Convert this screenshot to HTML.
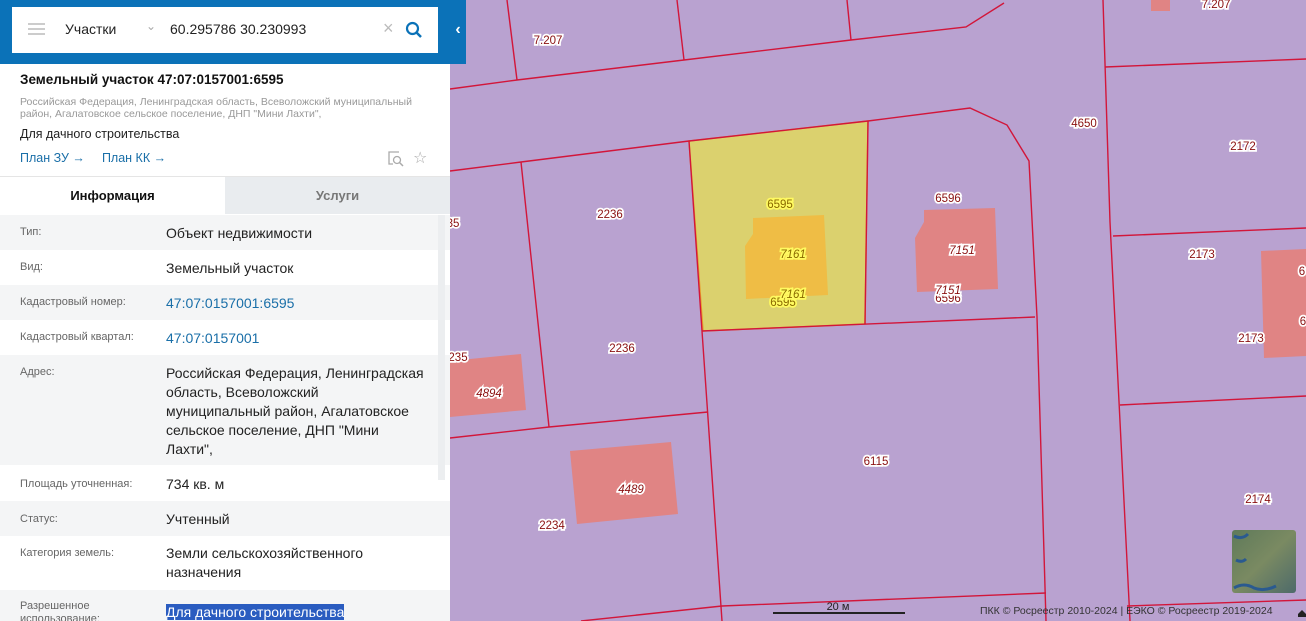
<!DOCTYPE html>
<html><head><meta charset="utf-8"><style>
*{margin:0;padding:0;box-sizing:border-box}
body{width:1306px;height:621px;overflow:hidden;position:relative;font-family:"Liberation Sans","DejaVu Sans",sans-serif;background:#b9a2d0}
#map{position:absolute;left:0;top:0}
#panel{position:absolute;left:0;top:0;width:450px;height:621px;background:#fff;overflow:hidden}
.hdr{height:64px;background:#0b72b8;position:relative}
.sb{position:absolute;left:12px;top:7px;width:426px;height:46px;background:#fff}
.tab{position:absolute;left:450px;top:0;width:16px;height:64px;background:#0b72b8;color:#fff;font-size:16px;font-weight:bold;text-align:center;line-height:60px}
.row{position:absolute;left:0;width:450px}
.lab{position:absolute;left:20px;font-size:11px;color:#666}
.val{position:absolute;left:166px;font-size:14px;color:#222;line-height:19px;width:280px;white-space:nowrap}
.g{background:#f4f5f6}
a{color:#1a6fa8;text-decoration:none}
.lbl{font-size:11.5px;fill:#8a1010;stroke:#fff;stroke-width:3.5;paint-order:stroke;font-family:"Liberation Sans",sans-serif;text-anchor:middle}
.ly{fill:#8a6a00;stroke:#fffa60}
</style></head><body>
<svg id="map" width="1306" height="621" viewBox="0 0 1306 621">
<rect width="1306" height="621" fill="#b9a2d0"/>
<polygon points="689,141 868,121 865,324 703,331" fill="#dbd16e" stroke="#e89a2a" stroke-width="1.5"/>
<polygon points="753,218 824,215 828,295 746,299 745,246 753,234" fill="#efbd45"/>
<polygon points="924,210 995,208 998,289 917,292 915,238 924,222" fill="#e08484"/>
<polygon points="450,361 521,354 526,410 450,417" fill="#e08484"/>
<polygon points="570,451 671,442 678,514 577,524" fill="#e08484"/>
<polygon points="1261,251 1306,249 1306,356 1264,358" fill="#e08484"/>
<polygon points="1151,0 1170,0 1170,11 1151,11" fill="#e08484"/>
<g stroke="#d2163a" stroke-width="1.4" fill="none">
<polyline points="450,89 517,80 684,60 851,40 966,27 1004,3"/>
<line x1="507" y1="0" x2="517" y2="80"/><line x1="677" y1="0" x2="684" y2="60"/><line x1="847" y1="0" x2="851" y2="40"/>
<polyline points="450,171 521,162 689,141 868,121 970,108 1007,125 1029,161 1037,317 1046,621"/>
<line x1="521" y1="162" x2="549" y2="427"/>
<polyline points="689,141 702,331 722,621"/>
<line x1="868" y1="121" x2="865" y2="324"/>
<line x1="702" y1="331" x2="1035" y2="317"/>
<polyline points="450,438 549,427 708,412"/>
<polyline points="581,621 722,606 1046,593"/>
<polyline points="1103,0 1110,222 1130,621"/>
<line x1="1105" y1="67" x2="1306" y2="59"/>
<line x1="1113" y1="236" x2="1306" y2="228"/>
<line x1="1120" y1="405" x2="1306" y2="396"/>
<line x1="1127" y1="606" x2="1306" y2="600"/>
</g>
<g>
<text x="548" y="44" class="lbl">7.207</text><text x="1216" y="8" class="lbl">7.207</text>
<text x="1084" y="127" class="lbl">4650</text><text x="1243" y="150" class="lbl">2172</text>
<text x="610" y="218" class="lbl">2236</text><text x="622" y="352" class="lbl">2236</text>
<text x="780" y="208" class="lbl ly">6595</text><text x="783" y="306" class="lbl ly">6595</text>
<text x="793" y="258" class="lbl ly" font-style="italic">7161</text><text x="793" y="298" class="lbl ly" font-style="italic">7161</text>
<text x="948" y="202" class="lbl">6596</text><text x="948" y="302" class="lbl">6596</text>
<text x="962" y="254" class="lbl" font-style="italic">7151</text><text x="948" y="294" class="lbl" font-style="italic">7151</text>
<text x="1202" y="258" class="lbl">2173</text><text x="1251" y="342" class="lbl">2173</text>
<text x="458" y="361" class="lbl">235</text><text x="453" y="227" class="lbl">35</text>
<text x="489" y="397" class="lbl" font-style="italic">4894</text><text x="631" y="493" class="lbl" font-style="italic">4489</text>
<text x="876" y="465" class="lbl">6115</text><text x="552" y="529" class="lbl">2234</text><text x="1258" y="503" class="lbl">2174</text>
<text x="1302" y="275" class="lbl">6</text><text x="1303" y="325" class="lbl">6</text>
</g>
<defs><linearGradient id="mm" x1="0" y1="0" x2="1" y2="1"><stop offset="0" stop-color="#5f7a5a"/><stop offset=".5" stop-color="#7a8a62"/><stop offset="1" stop-color="#4d6a6a"/></linearGradient></defs>
<rect x="1232" y="530" width="64" height="63" rx="3" fill="url(#mm)"/>
<path d="M1234 536 q8 4 14 -2 M1236 560 q6 3 10 -1" stroke="#2a5a90" stroke-width="3" fill="none"/>
<path d="M1234 588 q10 -6 20 0 q10 4 22 -2" stroke="#2a5a90" stroke-width="3" fill="none"/>
<text x="838" y="610" font-size="11" fill="#222" text-anchor="middle">20 м</text>
<line x1="773" y1="613" x2="905" y2="613" stroke="#222" stroke-width="2"/>
<text x="980" y="614" font-size="10.5" fill="#333">ПКК © Росреестр 2010-2024 | ЕЭКО © Росреестр 2019-2024</text>
<path d="M1298 614 l4 -4 4 4 v3 h-8z" fill="#222"/>
</svg>
<div class="tab">‹</div>
<div id="panel">
<div class="hdr"><div class="sb">
<div style="position:absolute;left:16px;top:16px;width:17px;height:2px;background:#ccc;box-shadow:0 5px 0 #ccc,0 10px 0 #ccc"></div>
<div style="position:absolute;left:53px;top:14px;font-size:14px;color:#222">Участки</div>
<div style="position:absolute;left:134px;top:12px;font-size:12px;color:#aaa">&#8964;</div>
<div style="position:absolute;left:158px;top:14px;font-size:14px;color:#222">60.295786 30.230993</div>
<div style="position:absolute;left:371px;top:11px;font-size:18px;color:#bbb">×</div>
<svg style="position:absolute;left:393px;top:14px" width="18" height="18"><circle cx="7.5" cy="7.5" r="5.5" stroke="#0b72b8" stroke-width="2.2" fill="none"/><line x1="11.5" y1="11.5" x2="16" y2="16" stroke="#0b72b8" stroke-width="2.5"/></svg>
</div></div>
<div style="position:absolute;left:20px;top:72px;font-size:13.5px;font-weight:bold;color:#111">Земельный участок 47:07:0157001:6595</div>
<div style="position:absolute;left:20px;top:96px;font-size:10.5px;color:#999;line-height:12px;white-space:nowrap">Российская Федерация, Ленинградская область, Всеволожский муниципальный<br>район, Агалатовское сельское поселение, ДНП "Мини Лахти",</div>
<div style="position:absolute;left:20px;top:127px;font-size:12.5px;color:#222">Для дачного строительства</div>
<div style="position:absolute;left:20px;top:151px;font-size:12.5px"><a>План ЗУ →</a><span style="margin-left:17px"></span><a>План КК →</a></div>
<svg style="position:absolute;left:387px;top:150px" width="18" height="18"><path d="M12 2H2v12h4" stroke="#aaa" stroke-width="1.3" fill="none"/><circle cx="10" cy="10" r="3.5" stroke="#aaa" stroke-width="1.3" fill="none"/><line x1="12.5" y1="12.5" x2="16" y2="16" stroke="#aaa" stroke-width="1.5"/></svg>
<div style="position:absolute;left:413px;top:148px;font-size:16px;color:#aaa">☆</div>
<div style="position:absolute;left:0;top:176px;width:450px;height:1px;background:#e5e5e5"></div>
<div style="position:absolute;left:0;top:177px;width:225px;height:37px;background:#fff;text-align:center;line-height:37px;font-size:13px;font-weight:bold;color:#111">Информация</div>
<div style="position:absolute;left:225px;top:177px;width:225px;height:37px;background:#e9ecef;text-align:center;line-height:37px;font-size:13px;font-weight:bold;color:#777">Услуги</div>
<div class="row g" style="top:215px;height:35px"><div class="lab" style="top:11px">Тип:</div><div class="val" style="top:9px">Объект недвижимости</div></div>
<div class="row" style="top:250px;height:35px"><div class="lab" style="top:11px">Вид:</div><div class="val" style="top:9px">Земельный участок</div></div>
<div class="row g" style="top:285px;height:35px"><div class="lab" style="top:11px">Кадастровый номер:</div><div class="val" style="top:9px"><a>47:07:0157001:6595</a></div></div>
<div class="row" style="top:320px;height:35px"><div class="lab" style="top:11px">Кадастровый квартал:</div><div class="val" style="top:9px"><a>47:07:0157001</a></div></div>
<div class="row g" style="top:355px;height:110px"><div class="lab" style="top:11px">Адрес:</div><div class="val" style="top:9px">Российская Федерация, Ленинградская<br>область, Всеволожский<br>муниципальный район, Агалатовское<br>сельское поселение, ДНП "Мини<br>Лахти",</div></div>
<div class="row" style="top:465px;height:36px"><div class="lab" style="top:13px">Площадь уточненная:</div><div class="val" style="top:10px">734 кв. м</div></div>
<div class="row g" style="top:501px;height:35px"><div class="lab" style="top:12px">Статус:</div><div class="val" style="top:9px">Учтенный</div></div>
<div class="row" style="top:536px;height:54px"><div class="lab" style="top:11px">Категория земель:</div><div class="val" style="top:8px">Земли сельскохозяйственного<br>назначения</div></div>
<div class="row g" style="top:590px;height:31px"><div class="lab" style="top:10px;line-height:13px">Разрешенное<br>использование:</div><div class="val" style="top:13px"><span style="background:#2a5cc0;color:#fff">Для дачного строительства</span></div></div>
<div style="position:absolute;left:438px;top:215px;width:7px;height:265px;background:#eceef0"></div>
</div>
</body></html>
